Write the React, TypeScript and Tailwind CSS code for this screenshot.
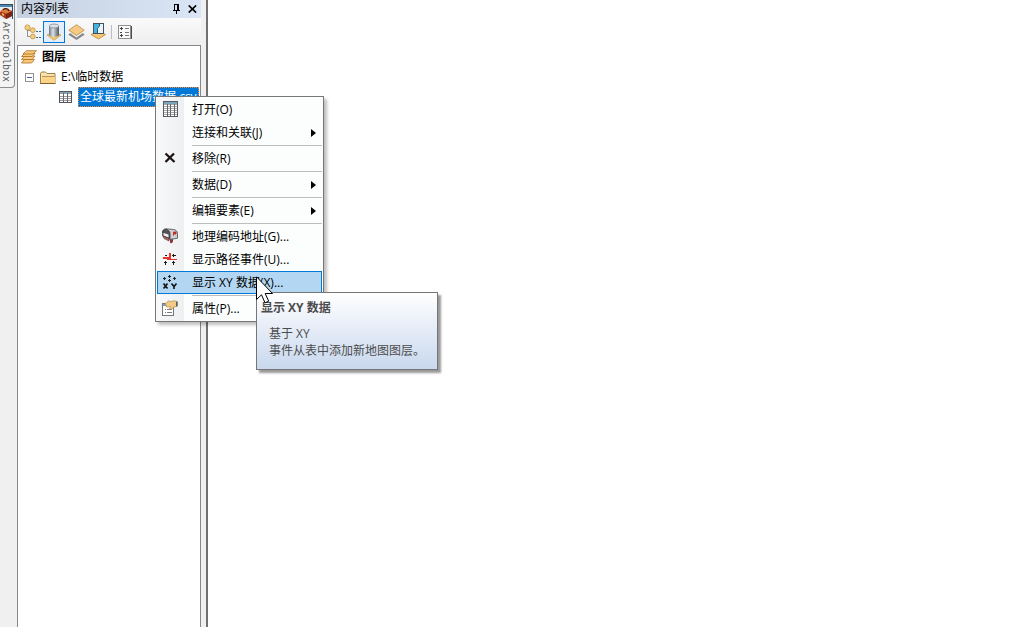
import { Fragment } from "react";
import type { ReactNode } from "react";

const ToolboxIcon = () => (
  <svg width="14" height="16" viewBox="0 0 14 16">
    <rect x="0" y="0" width="13" height="15" fill="#e4ecf4" />
    <path d="M0 0.5h13M12.5 0v15" stroke="#2b4a66" fill="none" />
    <path d="M0 1h12v2H0z" fill="#4f87ad" />
    <path d="M0 8l5-4 7 3v5l-6 3-6-4z" fill="#a83a1c" />
    <path d="M0 7l5-3 7 3-5 3z" fill="#e0793a" />
    <path d="M6 10l6-3v5l-6 3z" fill="#7c2412" />
    <path d="M3 6c1-2 5-2 6 1" stroke="#4a1a0c" strokeWidth="1.3" fill="none" />
    <path d="M2 9l2 1v2l-2-1z" fill="#f0c060" />
  </svg>
);

const TreeListIcon = () => (
  <svg width="17" height="16" viewBox="0 0 17 16">
    <path d="M3.5 5v7.5h3M3.5 6.5h3" stroke="#777" strokeWidth="0.8" fill="none" />
    <g fill="#f4cd7c" stroke="#c2934a" strokeWidth="0.8">
      <circle cx="3.5" cy="3.5" r="2.6" />
      <circle cx="8.8" cy="6.2" r="2.4" />
      <circle cx="8.8" cy="12.5" r="2.4" />
    </g>
    <path d="M12 7h2v1h-2zM15 7h2v1h-2zM12 13h2v1h-2zM15 13h2v1h-2z" fill="#386b8c" />
  </svg>
);

const DatabaseIcon = () => (
  <svg width="16" height="18" viewBox="0 0 16 18">
    <defs>
      <linearGradient id="drum">
        <stop offset="0" stopColor="#6d7782" />
        <stop offset="0.4" stopColor="#dfe3e7" />
        <stop offset="0.6" stopColor="#a9b0b8" />
        <stop offset="1" stopColor="#4e5762" />
      </linearGradient>
    </defs>
    <path d="M1 12l7-3 7 3-7 5.3z" fill="#f6c873" stroke="#c89a50" strokeWidth="0.8" />
    <path d="M3 3v9c0 2.4 10 2.4 10 0V3z" fill="url(#drum)" />
    <ellipse cx="8" cy="3" rx="4.8" ry="2" fill="#dce1e6" stroke="#77808a" strokeWidth="0.7" />
  </svg>
);

const VisibilityIcon = () => (
  <svg width="17" height="16" viewBox="0 0 17 16">
    <path d="M0.8 10.5l7.7-4 7.7 4-7.7 5z" fill="#8a8d92" stroke="#6d6f73" strokeWidth="0.7" />
    <path d="M1.5 8.5l7-3 7 3-7 5z" fill="#f5f1e6" />
    <path d="M0.8 6.2L8.5 0.7l7.7 5.5-7.7 5.2z" fill="#f6c987" stroke="#c0934c" strokeWidth="0.9" />
  </svg>
);

const SelectionIcon = () => (
  <svg width="17" height="17" viewBox="0 0 17 17">
    <path d="M1 11.5L8 8l7.5 3.5L8.5 16z" fill="#f6c873" stroke="#c08b3c" strokeWidth="0.9" />
    <rect x="3.5" y="0.5" width="10" height="10" fill="#e9f3f8" stroke="#45525e" />
    <path d="M4 1h5v2L7.500 5v5H4z" fill="#48b2df" />
    <path d="M9.500 1v2L7.500 5.500v5" stroke="#155d85" fill="none" />
  </svg>
);

const OptionsIcon = () => (
  <svg width="14" height="14" viewBox="0 0 14 14" shapeRendering="crispEdges">
    <rect x="0.5" y="0.5" width="12" height="13" fill="#fafafa" stroke="#8e8e8e" />
    <path d="M13.5 1v13" stroke="#4e4e4e" />
    <path d="M2 3h3v1H2zM3 2h1v3H3zM2 7h2v1H2zM2 10h3v1H2zM3 9h1v3H3z" fill="#444" />
    <path d="M7 3.5h4M7 7.5h4M7 10.5h4" stroke="#777" />
  </svg>
);

const LayersIcon = () => (
  <svg width="16" height="14" viewBox="0 0 16 14">
    <g fill="#fbc878" stroke="#a9702a" strokeWidth="0.8">
      <path d="M0.5 13L3.5 9.5h10L10.500 13z" />
      <path d="M0.5 9.500L3.500 6h10.500l-3 3.500z" />
      <path d="M0.5 6.500L3.500 3.500H14l-3 3z" />
      <path d="M2 4L5.500 0.700h10L12 4z" />
    </g>
  </svg>
);

const FolderIcon = () => (
  <svg width="16" height="13" viewBox="0 0 16 13">
    <path d="M0.5 12.5v-10l1-1.5h4l1.5 1.5h8v10z" fill="#f8e3b0" stroke="#a08040" />
    <path d="M1 12l1.5-6H15v6z" fill="#fbd488" />
    <path d="M2 5.5h12.5" stroke="#b99554" />
    <path d="M0.5 12.5h15" stroke="#80602c" />
  </svg>
);

const TableIcon = () => (
  <svg width="15" height="16" viewBox="0 0 15 16" shapeRendering="crispEdges">
    <rect x="0.5" y="0.5" width="14" height="15" fill="#fff" stroke="#555d62" />
    <path d="M1 1h13v2H1z" fill="#7aa5bb" />
    <path d="M1 3.5h13M1 5.5h13M1 7.5h13M1 9.5h13M1 11.5h13M1 13.5h13" stroke="#a8a8a8" />
    <path d="M4.5 3v12M7.5 3v12M11.5 3v12" stroke="#62666a" />
  </svg>
);

const SmallTableIcon = () => (
  <svg width="13" height="12" viewBox="0 0 13 12" shapeRendering="crispEdges">
    <rect x="0.5" y="0.5" width="12" height="11" fill="#fff" stroke="#4f565b" />
    <path d="M1 1h11v1H1z" fill="#7aa5bb" />
    <path d="M1 2.5h11M1 5.500h11M1 7.500h11M1 9.500h11" stroke="#9a9a9a" />
    <path d="M4.5 2v9M8.5 2v9" stroke="#62666a" />
  </svg>
);

const RemoveIcon = () => (
  <svg width="16" height="16" viewBox="0 0 16 16">
    <path d="M3.5 3.500l9 8.500M12 3.500L3.500 12" stroke="#1c1414" strokeWidth="2.3" fill="none" />
  </svg>
);

const MailboxIcon = () => (
  <svg width="16" height="16" viewBox="0 0 16 16">
    <path d="M8 9h3v5l-2 1.500-1-1z" fill="#8a3834" />
    <path d="M0.500 4.500C0.500 2 2 0.800 4 0.800l7.500.7c2.500.3 4 2 4 4.200v4.500L8 11.500z" fill="#cfd0d3" stroke="#55555a" strokeWidth="0.9" />
    <path d="M0.700 4.500c0-4.500 7-3.800 7.300 1V11L0.700 8z" fill="#55555b" stroke="#303033" strokeWidth="0.8" />
    <path d="M1.500 5l5 1.500v3l-5-2z" fill="#f2f0ea" />
    <path d="M1 8l6 2.500v2.500L2 10.500z" fill="#a86a68" stroke="#5c3030" strokeWidth="0.6" />
    <path d="M11.500 7.500V4H14v2h-1.500" fill="#e2382c" stroke="#a82018" strokeWidth="0.8" />
  </svg>
);

const RouteIcon = () => (
  <svg width="16" height="16" viewBox="0 0 16 16" shapeRendering="crispEdges">
    <path d="M1 6h8v2H1zM5 8h10v1H5zM7 2h2v7H7z" fill="#e43430" />
    <path
      d="M10 4h4v1h-4zM11 3h1v3h-1zM2 11h3v1H2zM3 10h1v4H3zM10 11h3v1h-3zM11 10h1v4h-1zM3 4h2v1H3z"
      fill="#1c1c1c"
    />
  </svg>
);

const XyIcon = () => (
  <svg width="16" height="16" viewBox="0 0 16 16">
    <path
      d="M6 2h3v1H6zM7 1h1v3H7zM11 4h3v1h-3zM12 3h1v3h-1zM1 4h3v1H1zM2 3h1v3H2zM6 6h3v1H6zM7 5h1v3H7z"
      fill="#222"
      shapeRendering="crispEdges"
    />
    <path d="M1.500 9.500l4 5M5.500 9.500l-4 5M9.500 9.500l2.500 3 2.500-3M12 12v3" stroke="#111" strokeWidth="1.6" fill="none" />
  </svg>
);

const PropertiesIcon = () => (
  <svg width="16" height="16" viewBox="0 0 16 16">
    <rect x="0.5" y="3.5" width="11" height="12" fill="#fff" stroke="#777" />
    <path d="M1 4h10v2H1z" fill="#7f9fc1" />
    <path d="M3 9.5h1M5 9.5h5M3 12.5h1M5 12.5h5" stroke="#7c7c7c" />
    <path d="M3.500 3.500l3-2.500 3 .5L12 0.700l3.500 1v4.500l-4 1-2 2-2-.5 1-2-4 .3z" fill="#f2ca87" stroke="#b08a4e" strokeWidth="0.7" />
    <path d="M14 1.500l1.500.5v4l-1.500.4z" fill="#5b6068" />
  </svg>
);

const PinIcon = () => (
  <svg width="7" height="10" viewBox="0 0 7 10" shapeRendering="crispEdges">
    <path d="M1.5 6V0.5h4V6M0 6.5h7M3.5 7v3M4.5 1v5" stroke="#000" fill="none" />
  </svg>
);

const CloseIcon = () => (
  <svg width="9" height="8" viewBox="0 0 9 8">
    <path d="M0.7 0.4l7.4 7.2M8.1 0.4L0.7 7.6" stroke="#000" strokeWidth="1.6" fill="none" />
  </svg>
);

const CursorIcon = () => (
  <svg width="20" height="28" viewBox="0 0 20 28">
    <path
      d="M0.500 0.800v22.700l5-4.700 3.500 8 3.700-1.600-3.500-7.700h7.300z"
      fill="#fff"
      stroke="#000"
      strokeWidth="1"
    />
  </svg>
);

type MenuEntry = {
  label: string;
  icon?: ReactNode;
  submenu?: boolean;
  active?: boolean;
  divider?: boolean;
};

const menuEntries: MenuEntry[] = [
  { label: "打开(O)", icon: <TableIcon /> },
  { label: "连接和关联(J)", submenu: true, divider: true },
  { label: "移除(R)", icon: <RemoveIcon />, divider: true },
  { label: "数据(D)", submenu: true, divider: true },
  { label: "编辑要素(E)", submenu: true, divider: true },
  { label: "地理编码地址(G)...", icon: <MailboxIcon /> },
  { label: "显示路径事件(U)...", icon: <RouteIcon /> },
  { label: "显示 XY 数据(X)...", icon: <XyIcon />, active: true, divider: true },
  { label: "属性(P)...", icon: <PropertiesIcon /> },
];

const toolbarButtons = [
  { label: "按绘制顺序列出", icon: <TreeListIcon /> },
  { label: "按源列出", icon: <DatabaseIcon />, active: true },
  { label: "按可见性列出", icon: <VisibilityIcon /> },
  { label: "按选择列出", icon: <SelectionIcon /> },
];

const ContextMenu = () => (
  <div
    role="menu"
    className="absolute top-24 left-[155px] w-[169px] border border-[#767676] bg-[linear-gradient(to_right,#f8f9fa,#eeeff1_28px,#fcfefe_28px)] p-px shadow-[3px_3px_3px_rgba(0,0,0,0.25)]"
  >
    {menuEntries.map((entry) => (
      <Fragment key={entry.label}>
        <button
          type="button"
          role="menuitem"
          className={
            entry.active
              ? "flex h-[23px] w-full items-center border border-[#0078d7] bg-[#b3d7f3] pr-[5px] pl-1 text-left"
              : "flex h-[23px] w-full items-center border border-transparent pr-[5px] pl-1 text-left"
          }
        >
          <span className="mr-3.5 flex h-[18px] w-4 shrink-0 items-start justify-center">{entry.icon}</span>
          <span className="grow whitespace-nowrap">{entry.label}</span>
          {entry.submenu && (
            <svg width="5" height="8" viewBox="0 0 5 8">
              <path d="M0 0l5 4-5 4z" fill="#000" />
            </svg>
          )}
        </button>
        {entry.divider && (
          <div role="separator" className="flex h-[3px] items-center pl-[35px]">
            <div className="h-px w-full bg-[#bdbdbd]" />
          </div>
        )}
      </Fragment>
    ))}
  </div>
);

const Tooltip = () => (
  <div
    role="tooltip"
    className="absolute top-[292px] left-64 h-[78px] w-[182px] border border-[#767676] bg-linear-to-b from-white to-[#c9d8ee] px-1 pt-1.5 text-[#4c4c4c] shadow-[3px_3px_2px_rgba(0,0,0,0.4)]"
  >
    <div className="leading-[18px] font-bold">显示 XY 数据</div>
    <p className="mt-2 pl-2 leading-[17px]">
      基于 XY
      <br />
      事件从表中添加新地图图层。
    </p>
  </div>
);

export default function App() {
  return (
    <div className="relative flex min-h-screen overflow-hidden bg-white font-['Open_Sans','Noto_Sans_CJK_SC',sans-serif] text-xs text-black">
      <aside className="w-[17px] shrink-0 bg-[#f0f0f0]">
        <button
          type="button"
          className="flex h-[88px] w-[15px] flex-col items-start rounded-br border-r border-b border-[#8c8c8c] bg-[#f4f4f4] pt-1"
        >
          <ToolboxIcon />
          <span className="mt-0.5 font-['Liberation_Mono',monospace] text-[10px] leading-[10px] text-[#555] [writing-mode:vertical-rl]">
            ArcToolbox
          </span>
        </button>
      </aside>

      <section className="flex w-[191px] shrink-0 flex-col border-r-2 border-[#707070] bg-[#f0f0f0] pr-[5px]">
        <header className="flex h-[18px] items-center bg-linear-to-r from-[#c5d1e0] to-[#dae6f5] pr-1 pl-1">
          <h1 className="grow leading-4">内容列表</h1>
          <button type="button" aria-label="自动隐藏" className="mr-2">
            <PinIcon />
          </button>
          <button type="button" aria-label="关闭">
            <CloseIcon />
          </button>
        </header>

        <div className="flex h-[27px] items-center bg-linear-to-b from-[#fafafa] to-[#eeeeee] pl-1">
          {toolbarButtons.map((button) => (
            <button
              key={button.label}
              type="button"
              aria-label={button.label}
              className={
                button.active
                  ? "flex size-[22px] items-center justify-center border border-[#0078d7] bg-[#e3eef8]"
                  : "flex size-[22px] items-center justify-center"
              }
            >
              {button.icon}
            </button>
          ))}
          <div className="mr-1.5 ml-0.5 h-3.5 w-px bg-[#bdbdbd]" />
          <button type="button" aria-label="选项">
            <OptionsIcon />
          </button>
        </div>

        <ul className="grow border border-b-0 border-[#828790] bg-white pt-px">
          <li className="flex h-5 items-center gap-[5px] pl-[3px] font-bold">
            <LayersIcon />
            图层
          </li>
          <li className="flex h-5 items-center pl-[7px]">
            <button
              type="button"
              aria-label="折叠"
              className="mr-1.5 flex size-[9px] items-center justify-center border border-[#919191] bg-white"
            >
              <span className="h-px w-[5px] bg-[#4b63a7]" />
            </button>
            <FolderIcon />
            <span className="ml-[5px]">E:\临时数据</span>
          </li>
          <li className="flex h-5 items-center pr-px pl-[41px]">
            <SmallTableIcon />
            <span className="ml-1.5 h-5 grow border border-dotted border-[#ff8728] bg-[#0078d7] pl-px leading-[18px] whitespace-nowrap text-white">
              全球最新机场数据.csv
            </span>
          </li>
        </ul>
      </section>

      <main className="grow bg-white" />

      <ContextMenu />
      <Tooltip />
      <div className="pointer-events-none absolute top-[276px] left-64">
        <CursorIcon />
      </div>
    </div>
  );
}
